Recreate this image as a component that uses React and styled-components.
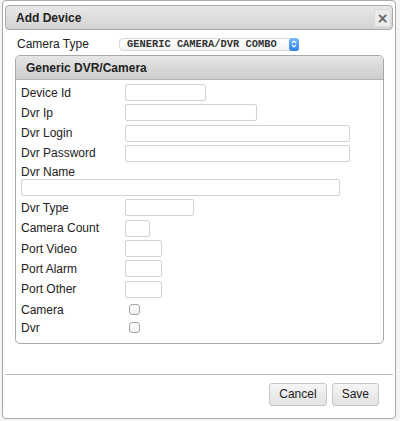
import React from 'react'
import styled, { createGlobalStyle } from 'styled-components'

const Global = createGlobalStyle`
  html, body {
    margin: 0;
    padding: 0;
    background: #f4f4f4;
    font-family: "Liberation Sans", Arial, sans-serif;
    color: #222;
  }
`

const Dialog = styled.div`
  width: 394px;
  margin: 0 0 0 2px;
  box-sizing: border-box;
  background: #fff;
  border: 1px solid #a8a8a8;
  border-radius: 4px;
  padding: 4px 2px 0 2px;
`

const TitleBar = styled.div`
  height: 25px;
  box-sizing: border-box;
  display: flex;
  align-items: center;
  justify-content: space-between;
  padding: 0 1px 0 10px;
  border: 1px solid #aaa;
  border-radius: 4px;
  background: linear-gradient(#e8e8e8, #d3d3d3);
`

const Title = styled.span`
  font-size: 12px;
  font-weight: bold;
  color: #222;
`

const CloseButton = styled.button`
  width: 17px;
  height: 18px;
  padding: 0;
  border: 1px solid #d8d8d8;
  border-radius: 2px;
  background: #ebebeb;
  color: #666;
  font-family: "DejaVu Sans", sans-serif;
  font-size: 14px;
  font-weight: bold;
  line-height: 16px;
  display: flex;
  align-items: center;
  justify-content: center;
`

const Content = styled.div`
  padding: 6px 9px 0 10px;
`

const TypeRow = styled.div`
  display: flex;
  align-items: center;
  height: 16px;
  padding-left: 2px;
  margin-bottom: 3px;
`

const TypeLabel = styled.span`
  font-size: 12px;
  width: 102px;
`

const SelectBox = styled.div`
  width: 180px;
  height: 13px;
  box-sizing: border-box;
  display: flex;
  align-items: center;
  justify-content: space-between;
  border: 1px solid #d8d8d8;
  border-radius: 4px;
  background: linear-gradient(#fff, #f4f4f4);
  padding-left: 7px;
  font-family: "Liberation Mono", "Courier New", monospace;
  font-size: 10.4px;
  font-weight: bold;
  color: #333;
`

const Stepper = styled.span`
  width: 10px;
  height: 13px;
  margin-right: -1px;
  border-radius: 3px;
  background: linear-gradient(#79bbfb, #2f80e6);
  display: flex;
  align-items: center;
  justify-content: center;
`

const Panel = styled.div`
  width: 369px;
  box-sizing: border-box;
  border: 1px solid #a8a8a8;
  border-radius: 5px;
  overflow: hidden;
`

const PanelHeader = styled.div`
  height: 24px;
  box-sizing: border-box;
  display: flex;
  align-items: center;
  padding-left: 10px;
  border-bottom: 1px solid #b4b4b4;
  background: linear-gradient(#e6e6e6, #cdcdcd);
  font-size: 12px;
  font-weight: bold;
`

const PanelBody = styled.div`
  padding: 4px 0 6px 5px;
`

const Row = styled.div`
  display: flex;
  align-items: center;
  height: ${({ $h }) => $h || 17}px;
  margin-bottom: ${({ $gap }) => ($gap === undefined ? 3.3 : $gap)}px;
`

const Label = styled.span`
  font-size: 12px;
  width: 104px;
  flex: none;
`

const Input = styled.div`
  width: ${({ $w }) => $w}px;
  height: 17px;
  box-sizing: border-box;
  border: 1px solid #d2d2d2;
  border-radius: 2px;
  background: #fff;
`

const Check = styled.span`
  width: 11px;
  height: 11px;
  margin-left: 4px;
  box-sizing: border-box;
  border: 1px solid #a6a6a6;
  border-radius: 3px;
  background: linear-gradient(#fff, #f0f0f0);
`

const ButtonPane = styled.div`
  margin-top: 30px;
  border-top: 1px solid #bdbdbd;
  padding: 8px 14px 12px 0;
  display: flex;
  justify-content: flex-end;
  gap: 5px;
`

const Button = styled.button`
  height: 23px;
  padding: 0 9px;
  border: 1px solid #c6c6c6;
  border-radius: 3px;
  background: linear-gradient(#f6f6f6, #e2e2e2);
  font-family: "Liberation Sans", Arial, sans-serif;
  font-size: 12px;
  color: #222;
`

const fields = [
  { label: 'Device Id', w: 81 },
  { label: 'Dvr Ip', w: 132 },
  { label: 'Dvr Login', w: 225 },
  { label: 'Dvr Password', w: 225 },
]

const small = [
  { label: 'Dvr Type', w: 69 },
  { label: 'Camera Count', w: 25 },
  { label: 'Port Video', w: 37 },
  { label: 'Port Alarm', w: 37 },
  { label: 'Port Other', w: 37 },
]

export default function App() {
  return (
    <>
      <Global />
      <Dialog>
        <TitleBar>
          <Title>Add Device</Title>
          <CloseButton>×</CloseButton>
        </TitleBar>
        <Content>
          <TypeRow>
            <TypeLabel>Camera Type</TypeLabel>
            <SelectBox>
              GENERIC CAMERA/DVR COMBO
              <Stepper>
                <svg width="6" height="10" viewBox="0 0 6 10">
                  <path d="M1 4 L3 2 L5 4 M1 6 L3 8 L5 6" stroke="#fff" strokeWidth="1.1" fill="none" />
                </svg>
              </Stepper>
            </SelectBox>
          </TypeRow>
          <Panel>
            <PanelHeader>Generic DVR/Camera</PanelHeader>
            <PanelBody>
              {fields.map((f) => (
                <Row key={f.label}>
                  <Label>{f.label}</Label>
                  <Input $w={f.w} />
                </Row>
              ))}
              <Row $h={14} $gap={0}>
                <Label>Dvr Name</Label>
              </Row>
              <Row>
                <Input $w={319} />
              </Row>
              {small.map((f) => (
                <Row key={f.label}>
                  <Label>{f.label}</Label>
                  <Input $w={f.w} />
                </Row>
              ))}
              <Row $h={18} $gap={0}>
                <Label>Camera</Label>
                <Check />
              </Row>
              <Row $h={18} $gap={0}>
                <Label>Dvr</Label>
                <Check />
              </Row>
            </PanelBody>
          </Panel>
        </Content>
        <ButtonPane>
          <Button>Cancel</Button>
          <Button>Save</Button>
        </ButtonPane>
      </Dialog>
    </>
  )
}
